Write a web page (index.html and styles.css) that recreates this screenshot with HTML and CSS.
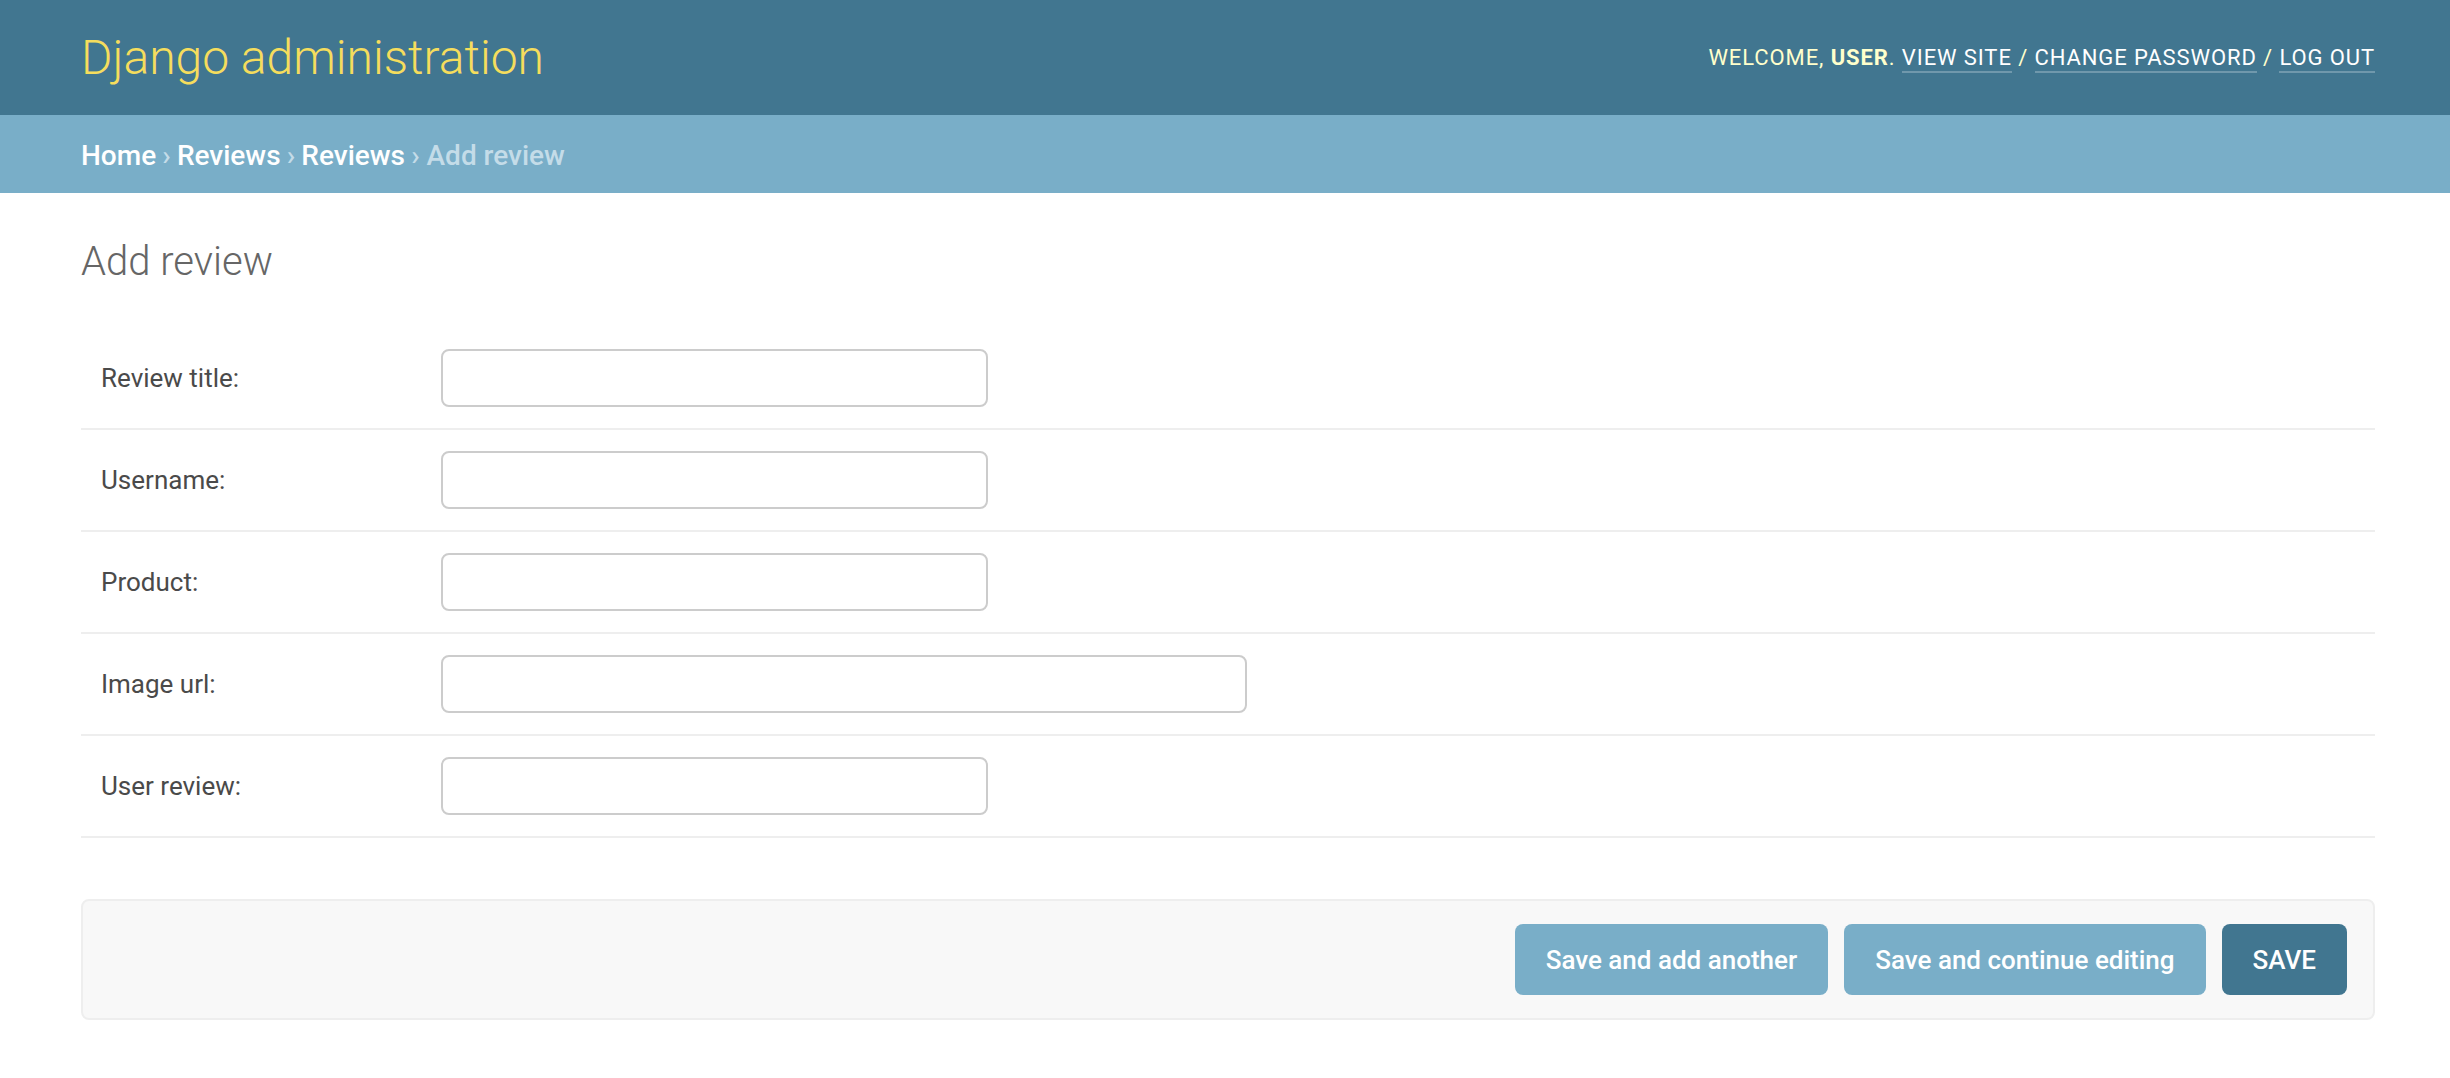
FILE: index.html
```html
<!DOCTYPE html>
<html lang="en">
  <head>
    <meta charset="UTF-8" />
    <meta name="viewport" content="width=device-width, initial-scale=1.0" />
    <title>Add review | Django site admin</title>
    <link rel="stylesheet" href="styles.css">
  </head>
  <body>
    <div id="header">
      <div id="branding">
        <h1 id="site-name"><a href="#">Django administration</a></h1>
      </div>
      <div id="user-tools">
        Welcome, <strong>user</strong>.
        <a href="#">View site</a> /
        <a href="#">Change password</a> /
        <a href="#">Log out</a>
      </div>
    </div>

    <div class="breadcrumbs">
      <a href="#">Home</a> &rsaquo;
      <a href="#">Reviews</a> &rsaquo;
      <a href="#">Reviews</a> &rsaquo;
      Add review
    </div>

    <div id="content">
      <h1>Add review</h1>
      <form>
        <fieldset class="module aligned">
          <div class="form-row">
            <label for="id_title">Review title:</label>
            <input type="text" id="id_title" class="vTextField" />
          </div>
          <div class="form-row">
            <label for="id_username">Username:</label>
            <input type="text" id="id_username" class="vTextField" />
          </div>
          <div class="form-row">
            <label for="id_product">Product:</label>
            <input type="text" id="id_product" class="vTextField" />
          </div>
          <div class="form-row">
            <label for="id_image_url">Image url:</label>
            <input type="url" id="id_image_url" class="vURLField" />
          </div>
          <div class="form-row">
            <label for="id_user_review">User review:</label>
            <input type="text" id="id_user_review" class="vTextField" />
          </div>
        </fieldset>

        <div class="submit-row">
          <input type="button" value="Save and add another" />
          <input type="button" value="Save and continue editing" />
          <input type="button" value="SAVE" class="default" />
        </div>
      </form>
    </div>
  </body>
</html>
```
FILE: styles.css
```css
body {
  margin: 0;
  padding: 0;
  font-family: Roboto, "Lucida Grande", "DejaVu Sans", Verdana, sans-serif;
  color: #333;
  background: #fff;
}
a {
  text-decoration: none;
}

#header {
  display: flex;
  align-items: center;
  justify-content: space-between;
  height: 115px;
  padding: 0 75px 0 81px;
  background: #417690;
  color: #ffc;
}
#site-name {
  margin: 0;
  font-size: 48px;
  font-weight: 300;
  line-height: 1;
}
#site-name a {
  color: #f5dd5d;
}
#user-tools {
  font-size: 22px;
  letter-spacing: 0.9px;
  text-transform: uppercase;
  color: #ffc;
}
#user-tools strong {
  font-weight: 700;
}
#user-tools a {
  color: #fff;
  border-bottom: 2px solid rgba(255, 255, 255, 0.25);
  padding-bottom: 1px;
}

.breadcrumbs {
  display: flex;
  align-items: center;
  gap: 0 0.22em;
  height: 78px;
  padding: 3px 81px 0;
  box-sizing: border-box;
  background: #79aec8;
  color: #c4dce8;
  font-size: 28px;
  font-weight: 500;
}
.breadcrumbs a {
  color: #fff;
}

#content {
  padding: 45px 75px 0 81px;
}
#content h1 {
  margin: 0 0 42px;
  font-size: 40px;
  font-weight: 300;
  line-height: 48px;
  color: #666;
}

fieldset {
  margin: 0;
  padding: 0;
  border: none;
}
.form-row {
  display: flex;
  align-items: center;
  padding: 21px 20px;
  border-bottom: 2px solid #eee;
}
.form-row label {
  width: 340px;
  flex-shrink: 0;
  font-size: 26px;
  color: #4a4a4a;
}
.form-row input {
  box-sizing: border-box;
  height: 58px;
  margin: 0;
  padding: 10px 12px;
  border: 2px solid #ccc;
  border-radius: 8px;
  background: #fff;
  font-family: inherit;
  font-size: 26px;
}
.vTextField {
  width: 547px;
}
.vURLField {
  width: 806px;
}

.submit-row {
  display: flex;
  justify-content: flex-end;
  align-items: center;
  gap: 16px;
  height: 121px;
  box-sizing: border-box;
  margin-top: 61px;
  padding: 0 26px;
  background: #f8f8f8;
  border: 2px solid #eee;
  border-radius: 8px;
}
.submit-row input {
  height: 71px;
  margin: 0;
  padding: 0 31px;
  border: none;
  border-radius: 8px;
  background: #79aec8;
  color: #fff;
  font-family: inherit;
  font-size: 26px;
  font-weight: 500;
  cursor: pointer;
}
.submit-row input.default {
  background: #417690;
}
```
